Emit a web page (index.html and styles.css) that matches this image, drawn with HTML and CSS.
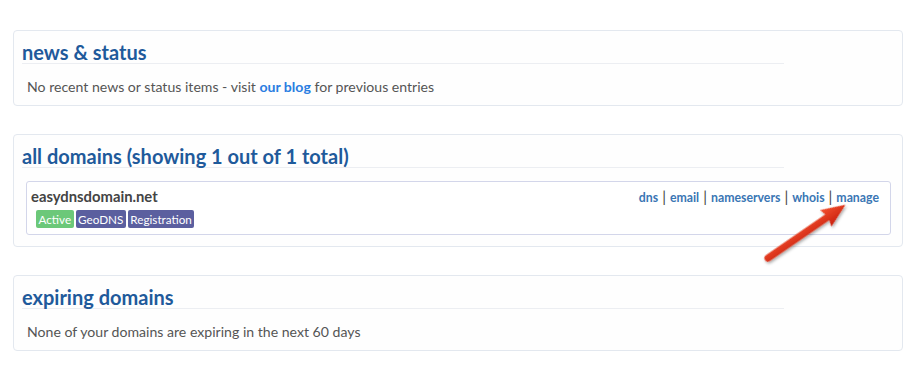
FILE: index.html
```html
<!DOCTYPE html>
<html>
<head>
<meta charset="utf-8">
<link rel="stylesheet" href="styles.css">
</head>
<body>
<div class="page">
  <section class="panel">
    <h2 class="panel-title">news &amp; status</h2>
    <p class="panel-text">No recent news or status items - visit <a class="blog" href="#">our blog</a> for previous entries</p>
  </section>

  <section class="panel">
    <h2 class="panel-title">all domains (showing 1 out of 1 total)</h2>
    <div class="domain">
      <div class="domain-main">
        <div class="domain-name">easydnsdomain.net</div>
        <div class="badges">
          <span class="badge badge-green">Active</span>
          <span class="badge badge-purple">GeoDNS</span>
          <span class="badge badge-purple">Registration</span>
        </div>
      </div>
      <div class="domain-links">
        <a href="#">dns</a><span class="sep">|</span><a href="#">email</a><span class="sep">|</span><a href="#">nameservers</a><span class="sep">|</span><a href="#">whois</a><span class="sep">|</span><a href="#">manage</a>
      </div>
    </div>
  </section>

  <section class="panel">
    <h2 class="panel-title">expiring domains</h2>
    <p class="panel-text">None of your domains are expiring in the next 60 days</p>
  </section>
</div>

<svg class="arrow" width="110" height="80" viewBox="0 0 110 80">
  <defs>
    <linearGradient id="ag" x1="0" y1="0" x2="0" y2="1">
      <stop offset="0" stop-color="#f3502f"/>
      <stop offset="1" stop-color="#c91f0d"/>
    </linearGradient>
    <filter id="sh" x="-30%" y="-30%" width="160%" height="160%">
      <feDropShadow dx="0" dy="2" stdDeviation="1.6" flood-color="#000" flood-opacity="0.35"/>
    </filter>
  </defs>
  <g transform="translate(13 63) rotate(-34.5)" filter="url(#sh)">
    <path d="M0 -3.6 L72 -3.6 L70 -10 L94 0 L70 10 L72 3.6 L0 3.6 A3.6 3.6 0 0 1 0 -3.6 Z" fill="url(#ag)"/>
  </g>
</svg>
</body>
</html>
```

FILE: styles.css
```css
html, body {
  margin: 0;
  padding: 0;
  background: #ffffff;
}

body {
  position: relative;
  font-family: Lato, "Open Sans", "Liberation Sans", sans-serif;
  color: #555555;
  width: 918px;
  height: 386px;
  overflow: hidden;
}

.page {
  padding: 30px 15px 0 13px;
  display: flex;
  flex-direction: column;
  gap: 28px;
}

.panel {
  border: 1px solid #e3e8ef;
  border-radius: 4px;
  background: #fefefe;
  padding: 10px 8px 8px 8px;
}

.panel-title {
  margin: 0;
  width: 762px;
  font-size: 20px;
  line-height: 22px;
  font-weight: 700;
  color: #1f5a9b;
  border-bottom: 1px solid #eceef2;
  padding-bottom: 0;
}

.panel-text {
  margin: 13px 0 0 5px;
  font-size: 14.1px;
  line-height: 20px;
  color: #555555;
}

.blog {
  color: #2a7de1;
  font-weight: 700;
  text-decoration: none;
}

.domain {
  margin: 13px 3px 3px 4px;
  border: 1px solid #d3d6ea;
  border-radius: 3px;
  padding: 4px 11px 6px 4px;
  display: flex;
  justify-content: space-between;
  align-items: flex-start;
  background: #ffffff;
}

.domain-name {
  font-size: 14.8px;
  line-height: 20px;
  font-weight: 700;
  color: #444444;
}

.badges {
  display: flex;
  gap: 2px;
  margin-top: 4px;
  margin-left: 5px;
}

.badge {
  font-size: 11.7px;
  line-height: 18px;
  padding: 0 2.5px;
  border-radius: 2px;
  color: #ffffff;
}

.badge-green {
  background: #6cc879;
}

.badge-purple {
  background: #5b5f9f;
}

.domain-links {
  font-size: 12.3px;
  line-height: 18px;
  font-weight: 700;
  margin-top: 1px;
}

.domain-links a {
  color: #3a76b4;
  text-decoration: none;
}

.sep {
  color: #444444;
  font-weight: 400;
  margin: 0 4px;
  font-size: 15px;
}

.arrow {
  position: absolute;
  left: 755px;
  top: 195px;
}
```
